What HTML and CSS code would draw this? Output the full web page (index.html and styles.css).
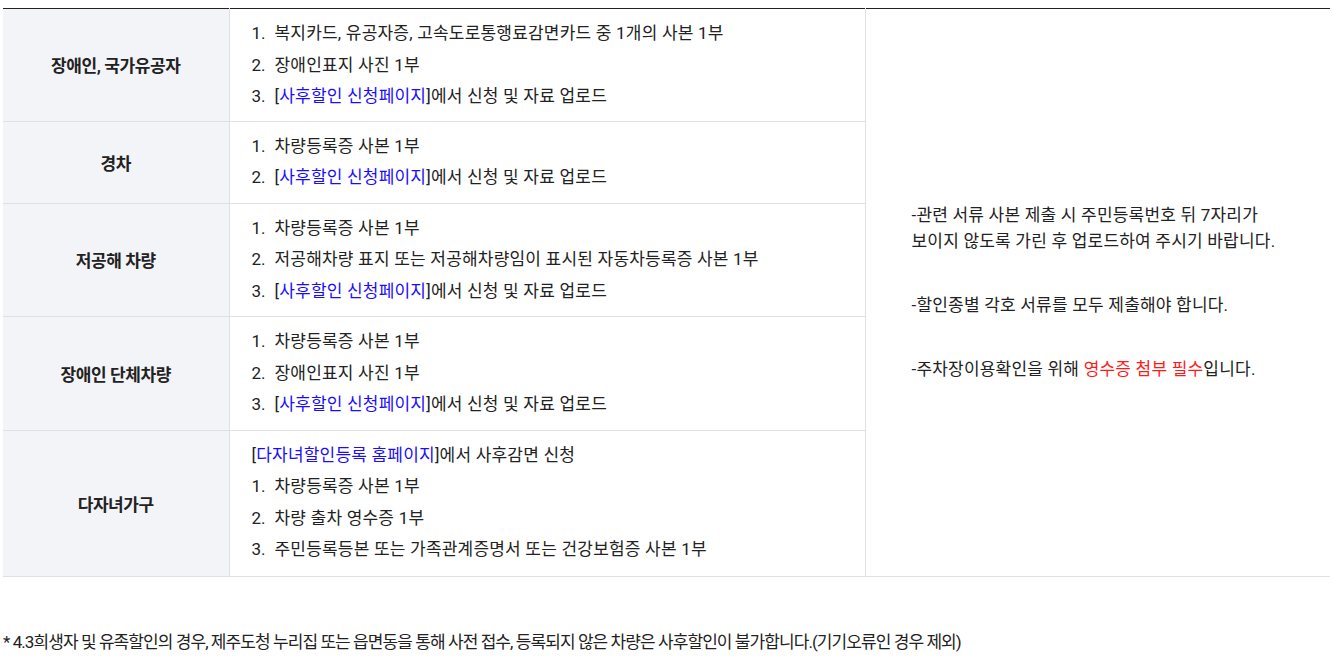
FILE: index.html
```html
<!DOCTYPE html>
<html lang="ko">
<head>
<meta charset="utf-8">
<link rel="stylesheet" href="styles.css">
</head>
<body>
<div class="wrap">
  <table class="doc-table">
    <colgroup>
      <col class="c-head">
      <col class="c-body">
      <col class="c-note">
    </colgroup>
    <tbody>
      <tr class="r1">
        <th>장애인, 국가유공자</th>
        <td class="items">
          <ol class="list">
            <li>복지카드, 유공자증, 고속도로통행료감면카드 중 1개의 사본 1부</li>
            <li>장애인표지 사진 1부</li>
            <li>[<span class="link">사후할인 신청페이지</span>]에서 신청 및 자료 업로드</li>
          </ol>
        </td>
        <td class="note" rowspan="5">
          <p>-관련 서류 사본 제출 시 주민등록번호 뒤 7자리가<br>보이지 않도록 가린 후 업로드하여 주시기 바랍니다.</p>
          <p>-할인종별 각호 서류를 모두 제출해야 합니다.</p>
          <p>-주차장이용확인을 위해 <span class="red">영수증 첨부 필수</span>입니다.</p>
        </td>
      </tr>
      <tr class="r2">
        <th>경차</th>
        <td class="items">
          <ol class="list">
            <li>차량등록증 사본 1부</li>
            <li>[<span class="link">사후할인 신청페이지</span>]에서 신청 및 자료 업로드</li>
          </ol>
        </td>
      </tr>
      <tr class="r3">
        <th>저공해 차량</th>
        <td class="items">
          <ol class="list">
            <li>차량등록증 사본 1부</li>
            <li>저공해차량 표지 또는 저공해차량임이 표시된 자동차등록증 사본 1부</li>
            <li>[<span class="link">사후할인 신청페이지</span>]에서 신청 및 자료 업로드</li>
          </ol>
        </td>
      </tr>
      <tr class="r4">
        <th>장애인 단체차량</th>
        <td class="items">
          <ol class="list">
            <li>차량등록증 사본 1부</li>
            <li>장애인표지 사진 1부</li>
            <li>[<span class="link">사후할인 신청페이지</span>]에서 신청 및 자료 업로드</li>
          </ol>
        </td>
      </tr>
      <tr class="r5">
        <th>다자녀가구</th>
        <td class="items">
          <div class="lead">[<span class="link">다자녀할인등록 홈페이지</span>]에서 사후감면 신청</div>
          <ol class="list">
            <li>차량등록증 사본 1부</li>
            <li>차량 출차 영수증 1부</li>
            <li>주민등록등본 또는 가족관계증명서 또는 건강보험증 사본 1부</li>
          </ol>
        </td>
      </tr>
    </tbody>
  </table>
  <p class="footnote">* 4.3희생자 및 유족할인의 경우, 제주도청 누리집 또는 읍면동을 통해 사전 접수, 등록되지 않은 차량은 사후할인이 불가합니다.(기기오류인 경우 제외)</p>
</div>
</body>
</html>
```

FILE: styles.css
```css
html, body {
  margin: 0;
  padding: 0;
  background: #ffffff;
}
body {
  font-family: Roboto, "Noto Sans CJK KR", sans-serif;
  color: #222222;
}
.wrap {
  padding: 8px 3px 0 3px;
}
.doc-table {
  width: 1327px;
  border-collapse: collapse;
  table-layout: fixed;
  border-top: 1px solid #222222;
}
.c-head { width: 226px; }
.c-body { width: 636px; }
.c-note { width: 465px; }
.doc-table th,
.doc-table td {
  border-bottom: 1px solid #dfe0e3;
  border-right: 1px solid #dfe0e3;
  padding: 0;
}
.doc-table td.note {
  border-right: 0;
}
.doc-table th {
  background: #f3f4f8;
  font-size: 17px;
  font-weight: 700;
  color: #222222;
  text-align: center;
  vertical-align: middle;
  letter-spacing: -0.4px;
}
.items {
  padding: 9px 0 9px 22px !important;
  font-size: 17px;
  line-height: 31.5px;
  letter-spacing: 0.2px;
  vertical-align: middle;
}
.r1 .items {
  padding-bottom: 8px !important;
}
.r5 .items {
  padding-bottom: 10px !important;
}
.list {
  margin: 0;
  padding: 0;
  list-style: none;
  counter-reset: item;
}
.list li {
  counter-increment: item;
}
.list li::before {
  content: counter(item) ".";
  display: inline-block;
  width: 23px;
  letter-spacing: 0;
}
.link {
  color: #1a0dff;
}
.red {
  color: #ff1a1a;
}
.note {
  padding: 0 0 0 46px !important;
  vertical-align: middle;
  font-size: 17px;
  line-height: 26px;
  letter-spacing: 0.2px;
}
.note p {
  margin: 0;
}
.note p + p {
  margin-top: 38px;
}
.footnote {
  margin: 54px 0 0 0;
  font-size: 17px;
  line-height: 22px;
  letter-spacing: -0.93px;
  color: #222222;
}
```
